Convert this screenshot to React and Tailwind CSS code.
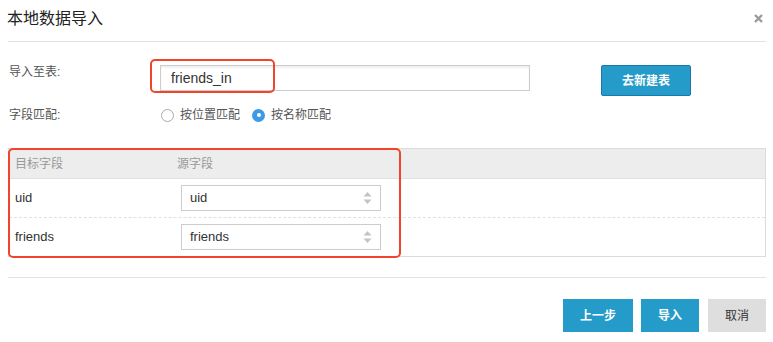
import React, { useState } from "react";

const font = {
  fontFamily: '"Liberation Sans", Arial, "Noto Sans CJK SC", sans-serif',
};

function Radio({ checked, label, onClick }) {
  return (
    <label className="flex items-center cursor-pointer" onClick={onClick}>
      {checked ? (
        <span className="w-[13px] h-[13px] rounded-full bg-[#3b9be8] flex items-center justify-center">
          <span className="w-[4px] h-[4px] rounded-full bg-white"></span>
        </span>
      ) : (
        <span className="w-[13px] h-[13px] rounded-full border border-[#aaa] bg-white"></span>
      )}
      <span className="ml-[6px] text-[12px] text-[#555]">{label}</span>
    </label>
  );
}

function SelectBox({ value }) {
  return (
    <div className="w-[200px] h-[26px] border border-[#ccc] bg-white flex items-center justify-between pl-[8px] pr-[8px]">
      <span className="text-[13px] text-[#333]">{value}</span>
      <svg width="9" height="14" viewBox="0 0 9 14">
        <path d="M4.5 1 L8.5 5.5 L0.5 5.5 Z" fill="#c4c4c4" />
        <path d="M4.5 13 L8.5 8.5 L0.5 8.5 Z" fill="#c4c4c4" />
      </svg>
    </div>
  );
}

export default function App() {
  const [match, setmatch] = useState("name");

  const rows = [
    { target: "uid", source: "uid" },
    { target: "friends", source: "friends" },
  ];

  return (
    <div className="w-[773px] h-[342px] bg-white relative overflow-hidden" style={font}>
      <div className="ml-2 mr-[7px]">
        {/* header */}
        <div className="h-[42px] flex items-center justify-between border-b border-[#e3e3e3]">
          <h1 className="text-[16px] text-[#222] -ml-px -mt-[3px]">本地数据导入</h1>
          <svg width="9" height="9" viewBox="0 0 9 9" className="mr-[3px] -mt-[5px]">
            <path d="M1 1 L8 8 M8 1 L1 8" stroke="#9a9a9a" strokeWidth="2.4" />
          </svg>
        </div>

        {/* target table */}
        <div className="flex items-start mt-[23px]">
          <div className="w-[152px] pl-px text-[12px] leading-[14px] text-[#555]">导入至表:</div>
          <input
            type="text"
            defaultValue="friends_in"
            className="w-[370px] h-[26px] border border-[#ccc] pl-[10px] text-[14px] text-[#333] outline-none shadow-[inset_0_2px_2px_rgba(0,0,0,0.06)]"
          />
          <button className="ml-[71px] w-[90px] h-[31px] bg-[#249bc8] border border-[#1a78ad] rounded-[2px] text-white text-[12px] font-bold">
            去新建表
          </button>
        </div>

        {/* match mode */}
        <div className="flex items-center mt-[9px] h-[20px]">
          <div className="w-[152px] pl-px text-[12px] text-[#555]">字段匹配:</div>
          <div className="flex items-center gap-[12px] ml-[1px]">
            <Radio
              checked={match === "position"}
              label="按位置匹配"
              onClick={() => setmatch("position")}
            />
            <Radio
              checked={match === "name"}
              label="按名称匹配"
              onClick={() => setmatch("name")}
            />
          </div>
        </div>

        {/* field mapping */}
        <div className="mt-[23px] border border-[#dcdcdc]">
          <div className="h-[30px] bg-[#ededed] border-b border-[#e0e0e0] flex items-center text-[12px] text-[#999]">
            <span className="w-[168px] pl-[6px]">目标字段</span>
            <span>源字段</span>
          </div>
          {rows.map((row, i) => (
            <div
              key={row.target}
              className={
                i === 0
                  ? "h-[39px] flex items-center border-b border-dashed border-[#e0e0e0]"
                  : "h-[38px] flex items-center"
              }
            >
              <span className="w-[172px] pl-[6px] text-[13px] text-[#333]">{row.target}</span>
              <SelectBox value={row.source} />
            </div>
          ))}
        </div>

        {/* footer */}
        <div className="mt-[20px] border-t border-[#e3e3e3]"></div>
        <div className="flex justify-end mt-[21px]">
          <button className="w-[70px] h-[33px] bg-[#249bc8] text-white text-[12px] font-bold">上一步</button>
          <button className="ml-[8px] w-[58px] h-[33px] bg-[#249bc8] text-white text-[12px] font-bold">导入</button>
          <button className="ml-[9px] w-[58px] h-[33px] bg-[#dedede] text-[#333] text-[12px]">取消</button>
        </div>
      </div>

      {/* red annotations */}
      <div className="absolute left-[150px] top-[59px] w-[125px] h-[34px] border-2 border-[#f0442c] rounded-[5px] pointer-events-none"></div>
      <div className="absolute left-[8px] top-[148px] w-[393px] h-[110px] border-2 border-[#f0442c] rounded-[5px] pointer-events-none"></div>
    </div>
  );
}
